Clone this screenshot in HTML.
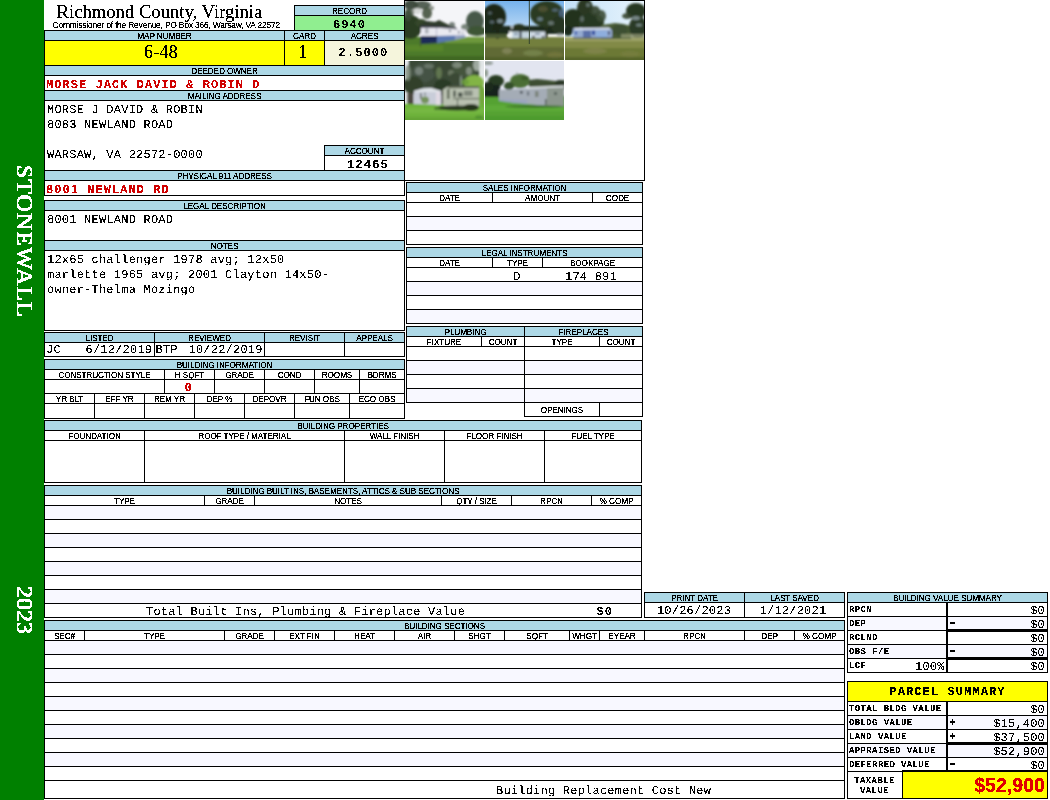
<!DOCTYPE html>
<html lang="en"><head><meta charset="utf-8"><title>Richmond County, Virginia - Property Record Card</title>
<style>
*{box-sizing:border-box;margin:0;padding:0}
html,body{width:1050px;height:800px;overflow:hidden;background:#fff}
body{position:relative;font-family:"Liberation Sans",sans-serif;color:#000}
.side{position:absolute;left:0;top:0;width:44px;height:800px;background:#008000}
.vt{position:absolute;left:2.5px;width:44px;color:#fff;font-family:"Liberation Serif",serif;font-size:24px;line-height:44px;writing-mode:vertical-rl;white-space:nowrap;-webkit-text-stroke:.4px #fff}
.c{position:absolute;border:1px solid #000}
.x{position:absolute;border:1px solid transparent;overflow:hidden;white-space:nowrap}
#tx{position:absolute;left:0;top:0;width:1050px;height:800px;filter:url(#thr)}
.m,.mb,.red,.lab,.val{text-rendering:geometricPrecision}
.m,.val,.mb,.red,.sred,.lab{filter:url(#thm)}
.title,.big,.sub{filter:url(#thb)}
.t{position:absolute;white-space:nowrap}
.h{font:8.2px/10px "Liberation Sans",sans-serif;text-align:center;letter-spacing:-.1px;padding-top:1px}
.m{font:12px/15px "Liberation Mono",monospace;letter-spacing:.22px;padding-left:2px}
.t.m{padding-left:0;line-height:13px}
.mb{font:bold 12px/13px "Liberation Mono",monospace;letter-spacing:1.1px}
.red{font:bold 12px/14px "Liberation Mono",monospace;color:#d00000;letter-spacing:1.05px;padding-left:1px;padding-top:2px}
.sred{font:bold 12px/13px "Liberation Mono",monospace;color:#d00000;text-align:center;padding:2px 3px 0 0;text-rendering:geometricPrecision}
.big{font:17.8px/23px "Liberation Serif",serif;text-align:center;letter-spacing:.4px}
.title{position:absolute;left:56.5px;top:1px;font:18.67px/22px "Liberation Serif",serif;white-space:nowrap}
.sub{position:absolute;left:52.5px;top:20px;font:8.5px/10px "Liberation Sans",sans-serif;white-space:nowrap;letter-spacing:-.23px;}
.lab{font:bold 9px/13px "Liberation Mono",monospace;padding-left:1px;padding-top:1px;letter-spacing:.38px}
.val{font:12px/14px "Liberation Mono",monospace;text-align:right;padding-right:2px;padding-top:1px;letter-spacing:.2px}
.sgn{font:12px/14px "Liberation Mono",monospace;text-rendering:geometricPrecision}
.ph{position:absolute;display:block}
.thick{position:absolute;background:#000}
.tax{font:bold 19.6px/25px "Liberation Sans",sans-serif;color:#e00000;text-align:right;padding-right:2px;padding-top:1px}
</style></head>
<body>
<div class="side"></div>
<svg width="0" height="0" style="position:absolute"><defs><filter id="thr" x="0" y="0" width="100%" height="100%" color-interpolation-filters="sRGB"><feComponentTransfer><feFuncA type="discrete" tableValues="0 1 1"/></feComponentTransfer></filter><filter id="thb" x="0" y="0" width="100%" height="100%" color-interpolation-filters="sRGB"><feComponentTransfer><feFuncA type="discrete" tableValues="0 0 0 1 1 1 1 1"/></feComponentTransfer></filter><filter id="thm" x="0" y="0" width="100%" height="100%" color-interpolation-filters="sRGB"><feComponentTransfer><feFuncA type="discrete" tableValues="0 0 0 0 1 1 1 1 1"/></feComponentTransfer></filter></defs></svg>
<div class="c" style="left:294px;top:5px;width:111px;height:11px;background:#add8e6;"></div>
<div class="c" style="left:294px;top:15px;width:111px;height:16px;background:#90ee90;padding-top:3px;text-align:center;"></div>
<div class="c" style="left:44px;top:30px;width:241px;height:11px;background:#add8e6;"></div>
<div class="c" style="left:284px;top:30px;width:41px;height:11px;background:#add8e6;"></div>
<div class="c" style="left:324px;top:30px;width:81px;height:11px;background:#add8e6;"></div>
<div class="c" style="left:44px;top:40px;width:241px;height:26px;background:#ffff00;padding-right:7px;"></div>
<div class="c" style="left:284px;top:40px;width:41px;height:26px;background:#ffff00;padding-right:3px;"></div>
<div class="c" style="left:324px;top:40px;width:81px;height:26px;background:#f5f5dc;padding-top:6px;text-align:center;padding-right:2px;"></div>
<div class="c" style="left:44px;top:65px;width:361px;height:11px;background:#add8e6;"></div>
<div class="c" style="left:44px;top:75px;width:361px;height:16px;"></div>
<div class="c" style="left:44px;top:90px;width:361px;height:11px;background:#add8e6;"></div>
<div class="c" style="left:44px;top:100px;width:361px;height:71px;padding-top:2px;"></div>
<div class="c" style="left:324px;top:145px;width:81px;height:11px;background:#add8e6;"></div>
<div class="c" style="left:324px;top:155px;width:81px;height:16px;padding-top:3px;text-align:center;padding-left:7px;"></div>
<div class="c" style="left:44px;top:170px;width:361px;height:11px;background:#add8e6;"></div>
<div class="c" style="left:44px;top:180px;width:361px;height:16px;"></div>
<div class="c" style="left:44px;top:200px;width:361px;height:11px;background:#add8e6;"></div>
<div class="c" style="left:44px;top:210px;width:361px;height:31px;padding-top:2px;"></div>
<div class="c" style="left:44px;top:240px;width:361px;height:11px;background:#add8e6;"></div>
<div class="c" style="left:44px;top:250px;width:361px;height:81px;padding-top:2px;"></div>
<div class="c" style="left:44px;top:332px;width:111px;height:11px;background:#add8e6;"></div>
<div class="c" style="left:44px;top:342px;width:111px;height:15px;"></div>
<div class="c" style="left:154px;top:332px;width:111px;height:11px;background:#add8e6;"></div>
<div class="c" style="left:154px;top:342px;width:111px;height:15px;"></div>
<div class="c" style="left:264px;top:332px;width:81px;height:11px;background:#add8e6;"></div>
<div class="c" style="left:264px;top:342px;width:81px;height:15px;"></div>
<div class="c" style="left:344px;top:332px;width:61px;height:11px;background:#add8e6;"></div>
<div class="c" style="left:344px;top:342px;width:61px;height:15px;"></div>
<div class="c" style="left:44px;top:359px;width:361px;height:11px;background:#add8e6;"></div>
<div class="c" style="left:44px;top:369px;width:121px;height:11px;"></div>
<div class="c" style="left:44px;top:379px;width:121px;height:15px;"></div>
<div class="c" style="left:164px;top:369px;width:51px;height:11px;"></div>
<div class="c" style="left:164px;top:379px;width:51px;height:15px;"></div>
<div class="c" style="left:214px;top:369px;width:51px;height:11px;"></div>
<div class="c" style="left:214px;top:379px;width:51px;height:15px;"></div>
<div class="c" style="left:264px;top:369px;width:51px;height:11px;"></div>
<div class="c" style="left:264px;top:379px;width:51px;height:15px;"></div>
<div class="c" style="left:314px;top:369px;width:46px;height:11px;"></div>
<div class="c" style="left:314px;top:379px;width:46px;height:15px;"></div>
<div class="c" style="left:359px;top:369px;width:46px;height:11px;"></div>
<div class="c" style="left:359px;top:379px;width:46px;height:15px;"></div>
<div class="c" style="left:44px;top:393px;width:51px;height:11px;"></div>
<div class="c" style="left:44px;top:403px;width:51px;height:16px;"></div>
<div class="c" style="left:94px;top:393px;width:51px;height:11px;"></div>
<div class="c" style="left:94px;top:403px;width:51px;height:16px;"></div>
<div class="c" style="left:144px;top:393px;width:51px;height:11px;"></div>
<div class="c" style="left:144px;top:403px;width:51px;height:16px;"></div>
<div class="c" style="left:194px;top:393px;width:51px;height:11px;"></div>
<div class="c" style="left:194px;top:403px;width:51px;height:16px;"></div>
<div class="c" style="left:244px;top:393px;width:51px;height:11px;"></div>
<div class="c" style="left:244px;top:403px;width:51px;height:16px;"></div>
<div class="c" style="left:294px;top:393px;width:56px;height:11px;"></div>
<div class="c" style="left:294px;top:403px;width:56px;height:16px;"></div>
<div class="c" style="left:349px;top:393px;width:56px;height:11px;"></div>
<div class="c" style="left:349px;top:403px;width:56px;height:16px;"></div>
<div class="c" style="left:404px;top:0px;width:241px;height:181px;"></div>
<svg class="ph" style="left:405px;top:1px" width="79" height="59" viewBox="0 0 79 59"><defs><filter id="b1" x="-10%" y="-10%" width="120%" height="120%"><feGaussianBlur stdDeviation="0.8"/></filter><filter id="s1" x="-10%" y="-10%" width="120%" height="120%"><feGaussianBlur stdDeviation="0.4"/></filter><clipPath id="c1"><rect width="79" height="59"/></clipPath></defs><g clip-path="url(#c1)"><rect x="0" y="0" width="79" height="59" fill="#f4f5f8"/><g filter="url(#b1)"><rect x="-2" y="36" width="83" height="25" fill="#4e7a2a"/><rect x="40" y="36" width="41" height="6" fill="#76a040" opacity="0.8"/><rect x="-2" y="55" width="83" height="6" fill="#3f6420" opacity="0.8"/><rect x="-2" y="44" width="40" height="6" fill="#5e8c2e" opacity="0.7"/><ellipse cx="6" cy="4" rx="7" ry="5" fill="#2e3c2c" opacity="0.9"/><ellipse cx="17" cy="4" rx="9" ry="4" fill="#3a4838" opacity="0.85"/><ellipse cx="22" cy="12" rx="5" ry="6" fill="#3a4834" opacity="0.85"/><ellipse cx="12" cy="10" rx="5" ry="3" fill="#c8ccc8" opacity="0.7"/><ellipse cx="5" cy="12" rx="4" ry="4" fill="#5a6456" opacity="0.8"/><ellipse cx="27" cy="7" rx="2" ry="2" fill="#5a6456" opacity="0.7"/><ellipse cx="5" cy="26" rx="12" ry="12" fill="#2a3e22"/><ellipse cx="16" cy="22" rx="6" ry="4" fill="#34462c"/><ellipse cx="3" cy="14" rx="4" ry="6" fill="#3a4a36" opacity="0.9"/><polygon points="14,24 22,20 30,21 34,19 40,22 46,25 52,27 52,30 14,30" fill="#2e3a2c"/><ellipse cx="47" cy="24" rx="3" ry="3" fill="#56625a" opacity="0.8"/><ellipse cx="70" cy="20" rx="9" ry="10" fill="#46584a"/><ellipse cx="72" cy="30" rx="10" ry="5" fill="#3e5434"/><ellipse cx="60" cy="27" rx="4" ry="4" fill="#5a6a5c" opacity="0.8"/><polygon points="16,26 52,27 61,29 61,36 50,38 32,41 16,42" fill="#e9e9f1"/><polygon points="16,25 36,25.5 52,27 52,28.2 36,27 16,27" fill="#4a4a5a"/><polygon points="16,35 32,35 32,42 16,43" fill="#1c2a58"/><polygon points="32,35 50,34.5 50,39 32,42" fill="#5876b0"/><polygon points="50,34.5 60,34 60,36.5 50,39" fill="#8e9cc0"/><rect x="20" y="27.5" width="3.5" height="5" fill="#9aa0a8" opacity="0.8"/><rect x="31" y="27" width="1" height="8" fill="#a8a8c0" opacity="0.8"/><rect x="44" y="29" width="2" height="2" fill="#707888"/><rect x="53" y="30" width="1.5" height="2.5" fill="#707888"/><rect x="57" y="31" width="1" height="2" fill="#808898"/><rect x="15" y="36" width="1" height="10" fill="#3c4c2c" opacity="0.8"/></g></g></svg>
<svg class="ph" style="left:485px;top:1px" width="79" height="59" viewBox="0 0 79 59"><defs><filter id="b2" x="-10%" y="-10%" width="120%" height="120%"><feGaussianBlur stdDeviation="0.8"/></filter><filter id="s2" x="-10%" y="-10%" width="120%" height="120%"><feGaussianBlur stdDeviation="0.4"/></filter><clipPath id="c2"><rect width="79" height="59"/></clipPath></defs><g clip-path="url(#c2)"><linearGradient id="sk2" x1="0" y1="0" x2="0" y2="1"><stop offset="0" stop-color="#76b2ec"/><stop offset="1" stop-color="#c4def6"/></linearGradient><rect x="0" y="0" width="79" height="32" fill="url(#sk2)"/><g filter="url(#b2)"><rect x="-2" y="36" width="83" height="25" fill="#737f3e"/><rect x="-2" y="46" width="83" height="15" fill="#5c6634" opacity="0.8"/><ellipse cx="22" cy="50" rx="5" ry="3" fill="#8a8c62" opacity="0.7"/><ellipse cx="48" cy="52" rx="10" ry="3" fill="#7a8a52" opacity="0.7"/><ellipse cx="70" cy="54" rx="8" ry="3" fill="#7c7c40" opacity="0.6"/><rect x="-2" y="56" width="83" height="5" fill="#4a5828" opacity="0.7"/><rect x="-2" y="25" width="83" height="8" fill="#1e2a1a"/><ellipse cx="34" cy="26" rx="6" ry="3" fill="#26321e"/><ellipse cx="27" cy="26.5" rx="1.2" ry="1.2" fill="#e8f0f8" opacity="0.9"/><ellipse cx="9" cy="16" rx="12" ry="13" fill="#1a2618"/><ellipse cx="3" cy="22" rx="6" ry="10" fill="#1c2a1a"/><ellipse cx="15" cy="20" rx="3" ry="2" fill="#8c9ca4" opacity="0.8"/><ellipse cx="5" cy="12" rx="2" ry="1.5" fill="#6c7c84" opacity="0.7"/><ellipse cx="7" cy="21" rx="2.5" ry="1.5" fill="#8090a0" opacity="0.6"/><rect x="11.5" y="28" width="2" height="10" fill="#1a2216"/><rect x="0" y="33" width="22" height="4" fill="#4c5c34"/><ellipse cx="62" cy="13" rx="17" ry="13" fill="#2c3a24"/><ellipse cx="74" cy="24" rx="8" ry="9" fill="#283620"/><ellipse cx="58" cy="8" rx="5" ry="3" fill="#5a5a38" opacity="0.7"/><ellipse cx="55" cy="18" rx="3" ry="2" fill="#7890a0" opacity="0.7"/><ellipse cx="70" cy="9" rx="3" ry="1.5" fill="#6c88a8" opacity="0.6"/><ellipse cx="66" cy="22" rx="3" ry="2" fill="#8a9aa0" opacity="0.6"/><ellipse cx="76" cy="12" rx="2" ry="4" fill="#5a7ab0" opacity="0.6"/><rect x="60" y="26" width="2.5" height="11" fill="#28301e"/><rect x="24" y="30.5" width="36" height="6.5" fill="#c4d4de"/><rect x="24" y="30.5" width="3" height="6.5" fill="#f0f4f4"/><rect x="34.5" y="30.5" width="2" height="6.5" fill="#2a3040"/><rect x="29" y="32" width="4" height="2" fill="#8a9ab0"/><rect x="46" y="31.5" width="14" height="4" fill="#d4dce8"/><rect x="50" y="32" width="5" height="1.5" fill="#6a7a90"/><ellipse cx="48.5" cy="36" rx="1.2" ry="1.2" fill="#202020"/><ellipse cx="58" cy="36" rx="1.2" ry="1.2" fill="#202020"/><ellipse cx="75" cy="33.5" rx="3.5" ry="1.6" fill="#8a9494" opacity="0.7"/></g><g filter="url(#s2)"><rect x="43.8" y="0" width="1.1" height="43" fill="#34402e" opacity="0.85"/></g></g></svg>
<svg class="ph" style="left:565px;top:1px" width="79" height="59" viewBox="0 0 79 59"><defs><filter id="b3" x="-10%" y="-10%" width="120%" height="120%"><feGaussianBlur stdDeviation="0.8"/></filter><filter id="s3" x="-10%" y="-10%" width="120%" height="120%"><feGaussianBlur stdDeviation="0.4"/></filter><clipPath id="c3"><rect width="79" height="59"/></clipPath></defs><g clip-path="url(#c3)"><linearGradient id="sk3" x1="0" y1="0" x2="1" y2="0"><stop offset="0" stop-color="#c2e0f8"/><stop offset="1" stop-color="#e8f4fc"/></linearGradient><rect x="0" y="0" width="79" height="36" fill="url(#sk3)"/><g filter="url(#b3)"><rect x="-2" y="36" width="83" height="25" fill="#828a46"/><rect x="-2" y="36" width="83" height="4" fill="#a4a870" opacity="0.8"/><rect x="-2" y="47" width="83" height="14" fill="#66742f" opacity="0.8"/><ellipse cx="30" cy="50" rx="12" ry="3" fill="#8a8a58" opacity="0.6"/><ellipse cx="65" cy="53" rx="10" ry="3" fill="#7c8044" opacity="0.6"/><rect x="-2" y="56" width="83" height="5" fill="#4e5c28" opacity="0.7"/><ellipse cx="20" cy="8" rx="8" ry="11" fill="#2a3824"/><ellipse cx="8" cy="19" rx="10" ry="11" fill="#24321c"/><ellipse cx="26" cy="21" rx="13" ry="9" fill="#283820"/><ellipse cx="36" cy="15" rx="5" ry="6" fill="#3a4a34" opacity="0.9"/><ellipse cx="30" cy="10" rx="5" ry="5" fill="#34442e" opacity="0.9"/><ellipse cx="3" cy="30" rx="5" ry="5" fill="#1e2a1a"/><ellipse cx="23" cy="4" rx="2" ry="2" fill="#8a9ca0" opacity="0.6"/><ellipse cx="17" cy="18" rx="2" ry="3" fill="#8898a0" opacity="0.5"/><polygon points="36,24 44,23 50,22 58,23 66,25 66,38 36,38" fill="#4a5c36"/><ellipse cx="55" cy="29" rx="8" ry="6" fill="#3e5030"/><ellipse cx="71" cy="10" rx="10" ry="8" fill="#283824"/><ellipse cx="73" cy="26" rx="9" ry="11" fill="#2a3a26"/><ellipse cx="62" cy="15" rx="5" ry="3" fill="#34442e" opacity="0.9"/><ellipse cx="71" cy="17" rx="4" ry="2" fill="#98a8b0" opacity="0.7"/><ellipse cx="74" cy="24" rx="3" ry="1.5" fill="#a0b0b8" opacity="0.6"/><rect x="56" y="33" width="24" height="4" fill="#8c9470" opacity="0.8"/><polygon points="8,27.5 44,27 47,29 47,37 10,37 8,35" fill="#94aad0"/><polygon points="9,27 44,26.5 46,28.5 10,29" fill="#d8e0f0"/><rect x="18" y="29.5" width="8" height="7" fill="#5a70a8"/><rect x="27" y="29.5" width="3" height="4.5" fill="#2848a0"/><rect x="10" y="30.5" width="2" height="3" fill="#2c50a8"/><rect x="43" y="30" width="1.6" height="4" fill="#30385c"/><rect x="31" y="30" width="11" height="7" fill="#8eaede"/><rect x="8" y="36.5" width="40" height="1.2" fill="#3c4434" opacity="0.8"/></g></g></svg>
<svg class="ph" style="left:405px;top:61px" width="79" height="59" viewBox="0 0 79 59"><defs><filter id="b4" x="-10%" y="-10%" width="120%" height="120%"><feGaussianBlur stdDeviation="0.8"/></filter><filter id="s4" x="-10%" y="-10%" width="120%" height="120%"><feGaussianBlur stdDeviation="0.4"/></filter><clipPath id="c4"><rect width="79" height="59"/></clipPath></defs><g clip-path="url(#c4)"><rect x="0" y="0" width="79" height="59" fill="#e4e8ea"/><g filter="url(#b4)"><rect x="4" y="-2" width="70" height="32" fill="#3a4a38"/><ellipse cx="18" cy="12" rx="12" ry="10" fill="#445244"/><ellipse cx="40" cy="8" rx="12" ry="9" fill="#3a4a36"/><ellipse cx="60" cy="8" rx="12" ry="8" fill="#44543e"/><ellipse cx="14" cy="10" rx="4" ry="4" fill="#98a49c" opacity="0.6"/><ellipse cx="24" cy="5" rx="5" ry="2.5" fill="#8c988c" opacity="0.5"/><ellipse cx="34" cy="12" rx="3" ry="6" fill="#6c8058" opacity="0.8"/><ellipse cx="52" cy="4" rx="5" ry="3" fill="#a0aca0" opacity="0.6"/><ellipse cx="64" cy="10" rx="3" ry="4" fill="#aab4aa" opacity="0.6"/><ellipse cx="46" cy="12" rx="3" ry="3" fill="#88947f" opacity="0.6"/><ellipse cx="72" cy="4" rx="4" ry="6" fill="#c8d0cc" opacity="0.7"/><ellipse cx="8" cy="24" rx="10" ry="9" fill="#30402a"/><ellipse cx="38" cy="26" rx="9" ry="8" fill="#2c3a28"/><ellipse cx="3" cy="12" rx="3" ry="8" fill="#7c8a78" opacity="0.8"/><ellipse cx="50" cy="17" rx="6" ry="5" fill="#3a4a34"/><ellipse cx="56" cy="20" rx="1.2" ry="6" fill="#9aa69c" opacity="0.7"/><ellipse cx="69" cy="22" rx="10" ry="8" fill="#82b444"/><ellipse cx="76" cy="36" rx="5" ry="12" fill="#74a83c"/><ellipse cx="60" cy="21" rx="4" ry="3" fill="#6c9c3c" opacity="0.8"/><rect x="-2" y="43" width="83" height="18" fill="#6eb23a"/><rect x="-2" y="47" width="83" height="5" fill="#7cbc48" opacity="0.6"/><rect x="-2" y="56" width="83" height="5" fill="#5c9c30" opacity="0.6"/><rect x="2.5" y="32" width="6" height="11" fill="#4c4640"/><polygon points="9,30 18,27.5 26,27 36,30 36,44 9,43" fill="#c9cdd9"/><polygon points="9,30 18,27.5 26,27 36,30 36,31 9,31" fill="#dfe3e8"/><rect x="15" y="32" width="1.4" height="6" fill="#4a544a"/><rect x="19.5" y="31.5" width="1" height="3" fill="#5a645a"/><ellipse cx="20" cy="39" rx="4" ry="3.5" fill="#6c8c4c" opacity="0.9"/><rect x="31" y="31" width="4" height="13" fill="#e4dce4" opacity="0.9"/><rect x="36.3" y="30" width="2" height="13" fill="#3a3430"/><polygon points="38,28.5 43,25.5 74,25.5 74,46 44,46 38,44" fill="#b9c1b1"/><polygon points="43,25 74,25 74,27 43,27.2" fill="#5a6450"/><rect x="42" y="28" width="2.5" height="10" fill="#4a5444" opacity="0.8"/><rect x="48.5" y="29.5" width="2" height="6.5" fill="#2c342c"/><rect x="53" y="31.5" width="4.5" height="4.5" fill="#4c544c"/><rect x="59" y="29.5" width="8.5" height="5.5" fill="#80887c"/><rect x="48" y="37" width="26" height="1.2" fill="#5c6454"/><rect x="52" y="38" width="1" height="8" fill="#4a5444"/><ellipse cx="52" cy="47" rx="22" ry="2.6" fill="#2a3a22"/><ellipse cx="66" cy="46.5" rx="8" ry="3.5" fill="#26341e"/><ellipse cx="32" cy="47.5" rx="3" ry="1.5" fill="#4c7c30"/><ellipse cx="74" cy="56" rx="4" ry="1.5" fill="#4a8a2c" opacity="0.8"/></g></g></svg>
<svg class="ph" style="left:485px;top:61px" width="79" height="59" viewBox="0 0 79 59"><defs><filter id="b5" x="-10%" y="-10%" width="120%" height="120%"><feGaussianBlur stdDeviation="0.8"/></filter><filter id="s5" x="-10%" y="-10%" width="120%" height="120%"><feGaussianBlur stdDeviation="0.4"/></filter><clipPath id="c5"><rect width="79" height="59"/></clipPath></defs><g clip-path="url(#c5)"><rect x="0" y="0" width="79" height="59" fill="#e2e5f0"/><g filter="url(#b5)"><ellipse cx="3" cy="2" rx="5" ry="2" fill="#7a867c" opacity="0.7"/><ellipse cx="1" cy="12" rx="2" ry="4" fill="#6a7a64" opacity="0.7"/><rect x="-2" y="35" width="83" height="26" fill="#55a232"/><rect x="-2" y="44" width="83" height="6" fill="#62b03c" opacity="0.6"/><rect x="-2" y="55" width="83" height="6" fill="#4a962c" opacity="0.6"/><ellipse cx="11" cy="20" rx="8" ry="6" fill="#283a22"/><rect x="-2" y="24" width="17" height="12" fill="#16241a"/><ellipse cx="3" cy="26" rx="6" ry="5" fill="#1a2a1c"/><ellipse cx="35" cy="20" rx="10" ry="7" fill="#4c6e36"/><ellipse cx="24" cy="25" rx="5" ry="4" fill="#34502a"/><ellipse cx="40" cy="17" rx="4" ry="2" fill="#3c5a2c"/><polygon points="44,19 52,18 62,19 70,20 80,19 80,28 44,28" fill="#3c4e32"/><ellipse cx="75" cy="22" rx="5" ry="3" fill="#2a3826"/><ellipse cx="32" cy="13" rx="1" ry="2" fill="#8a968c" opacity="0.5"/><polygon points="14,29 42,27.5 79,25.5 79,46 62,45 42,43 14,39" fill="#a4acb6"/><polygon points="42,26 79,24.5 79,26.5 60,27 42,28" fill="#dfe3e6"/><polygon points="62,27 79,26.5 79,46 62,45" fill="#8c968e"/><polygon points="14,38 42,39 42,43 28,42 14,40" fill="#9aa4c0" opacity="0.9"/><rect x="35" y="30" width="2.5" height="2.5" fill="#3a424a"/><rect x="42.5" y="30.5" width="1.2" height="4" fill="#3a424a"/><rect x="50" y="30" width="3.5" height="6" fill="#7c847c"/><rect x="69" y="31" width="3" height="3" fill="#5c6660"/><rect x="60" y="38" width="1.5" height="6" fill="#4a544c"/><ellipse cx="50" cy="45.5" rx="30" ry="1.4" fill="#3a6c28" opacity="0.8"/></g></g></svg>
<div class="c" style="left:406px;top:182px;width:237px;height:11px;background:#add8e6;"></div>
<div class="c" style="left:406px;top:192px;width:87px;height:11px;"></div>
<div class="c" style="left:492px;top:192px;width:101px;height:11px;"></div>
<div class="c" style="left:592px;top:192px;width:51px;height:11px;"></div>
<div class="c" style="left:406px;top:202px;width:237px;height:15px;"></div>
<div class="c" style="left:406px;top:216px;width:237px;height:15px;background:#f8f8ff;"></div>
<div class="c" style="left:406px;top:230px;width:237px;height:15px;"></div>
<div class="c" style="left:406px;top:247px;width:237px;height:11px;background:#add8e6;"></div>
<div class="c" style="left:406px;top:257px;width:87px;height:11px;"></div>
<div class="c" style="left:492px;top:257px;width:51px;height:11px;"></div>
<div class="c" style="left:542px;top:257px;width:101px;height:11px;"></div>
<div class="c" style="left:406px;top:267px;width:237px;height:15px;"></div>
<div class="c" style="left:406px;top:281px;width:237px;height:15px;background:#f8f8ff;"></div>
<div class="c" style="left:406px;top:295px;width:237px;height:15px;"></div>
<div class="c" style="left:406px;top:309px;width:237px;height:15px;background:#f8f8ff;"></div>
<div class="c" style="left:406px;top:326px;width:119px;height:11px;background:#add8e6;"></div>
<div class="c" style="left:524px;top:326px;width:119px;height:11px;background:#add8e6;"></div>
<div class="c" style="left:406px;top:336px;width:76px;height:11px;"></div>
<div class="c" style="left:481px;top:336px;width:44px;height:11px;"></div>
<div class="c" style="left:524px;top:336px;width:76px;height:11px;"></div>
<div class="c" style="left:599px;top:336px;width:44px;height:11px;"></div>
<div class="c" style="left:406px;top:346px;width:119px;height:15px;"></div>
<div class="c" style="left:524px;top:346px;width:119px;height:15px;"></div>
<div class="c" style="left:406px;top:360px;width:119px;height:15px;background:#f8f8ff;"></div>
<div class="c" style="left:524px;top:360px;width:119px;height:15px;background:#f8f8ff;"></div>
<div class="c" style="left:406px;top:374px;width:119px;height:15px;"></div>
<div class="c" style="left:524px;top:374px;width:119px;height:15px;"></div>
<div class="c" style="left:406px;top:388px;width:119px;height:15px;background:#f8f8ff;"></div>
<div class="c" style="left:524px;top:388px;width:119px;height:15px;background:#f8f8ff;"></div>
<div class="c" style="left:524px;top:402px;width:76px;height:15px;padding-top:3px;"></div>
<div class="c" style="left:599px;top:402px;width:44px;height:15px;"></div>
<div class="c" style="left:44px;top:420px;width:598px;height:11px;background:#add8e6;"></div>
<div class="c" style="left:44px;top:430px;width:101px;height:11px;"></div>
<div class="c" style="left:44px;top:440px;width:101px;height:43px;"></div>
<div class="c" style="left:144px;top:430px;width:201px;height:11px;"></div>
<div class="c" style="left:144px;top:440px;width:201px;height:43px;"></div>
<div class="c" style="left:344px;top:430px;width:101px;height:11px;"></div>
<div class="c" style="left:344px;top:440px;width:101px;height:43px;"></div>
<div class="c" style="left:444px;top:430px;width:101px;height:11px;"></div>
<div class="c" style="left:444px;top:440px;width:101px;height:43px;"></div>
<div class="c" style="left:544px;top:430px;width:98px;height:11px;"></div>
<div class="c" style="left:544px;top:440px;width:98px;height:43px;"></div>
<div class="c" style="left:44px;top:485px;width:598px;height:11px;background:#add8e6;"></div>
<div class="c" style="left:44px;top:495px;width:161px;height:11px;"></div>
<div class="c" style="left:204px;top:495px;width:51px;height:11px;"></div>
<div class="c" style="left:254px;top:495px;width:188px;height:11px;"></div>
<div class="c" style="left:441px;top:495px;width:71px;height:11px;"></div>
<div class="c" style="left:511px;top:495px;width:81px;height:11px;"></div>
<div class="c" style="left:591px;top:495px;width:51px;height:11px;"></div>
<div class="c" style="left:44px;top:505px;width:598px;height:15px;background:#f8f8ff;"></div>
<div class="c" style="left:44px;top:519px;width:598px;height:15px;"></div>
<div class="c" style="left:44px;top:533px;width:598px;height:15px;background:#f8f8ff;"></div>
<div class="c" style="left:44px;top:547px;width:598px;height:15px;"></div>
<div class="c" style="left:44px;top:561px;width:598px;height:15px;background:#f8f8ff;"></div>
<div class="c" style="left:44px;top:575px;width:598px;height:15px;"></div>
<div class="c" style="left:44px;top:589px;width:598px;height:15px;background:#f8f8ff;"></div>
<div class="c" style="left:44px;top:603px;width:598px;height:15px;"></div>
<div class="c" style="left:644px;top:592px;width:101px;height:11px;background:#add8e6;"></div>
<div class="c" style="left:744px;top:592px;width:101px;height:11px;background:#add8e6;"></div>
<div class="c" style="left:644px;top:602px;width:101px;height:16px;text-align:center;line-height:14px;padding:1px 1px 0 0;"></div>
<div class="c" style="left:744px;top:602px;width:101px;height:16px;text-align:center;line-height:14px;padding:1px 3px 0 0;"></div>
<div class="c" style="left:44px;top:620px;width:801px;height:11px;background:#add8e6;"></div>
<div class="c" style="left:44px;top:630px;width:41px;height:11px;"></div>
<div class="c" style="left:84px;top:630px;width:141px;height:11px;"></div>
<div class="c" style="left:224px;top:630px;width:51px;height:11px;"></div>
<div class="c" style="left:274px;top:630px;width:61px;height:11px;"></div>
<div class="c" style="left:334px;top:630px;width:61px;height:11px;"></div>
<div class="c" style="left:394px;top:630px;width:61px;height:11px;"></div>
<div class="c" style="left:454px;top:630px;width:51px;height:11px;"></div>
<div class="c" style="left:504px;top:630px;width:66px;height:11px;"></div>
<div class="c" style="left:569px;top:630px;width:31px;height:11px;"></div>
<div class="c" style="left:599px;top:630px;width:46px;height:11px;"></div>
<div class="c" style="left:644px;top:630px;width:101px;height:11px;"></div>
<div class="c" style="left:744px;top:630px;width:51px;height:11px;"></div>
<div class="c" style="left:794px;top:630px;width:51px;height:11px;"></div>
<div class="c" style="left:44px;top:640px;width:801px;height:15px;background:#f8f8ff;"></div>
<div class="c" style="left:44px;top:654px;width:801px;height:15px;"></div>
<div class="c" style="left:44px;top:668px;width:801px;height:15px;background:#f8f8ff;"></div>
<div class="c" style="left:44px;top:682px;width:801px;height:15px;"></div>
<div class="c" style="left:44px;top:696px;width:801px;height:15px;background:#f8f8ff;"></div>
<div class="c" style="left:44px;top:710px;width:801px;height:15px;"></div>
<div class="c" style="left:44px;top:724px;width:801px;height:15px;background:#f8f8ff;"></div>
<div class="c" style="left:44px;top:738px;width:801px;height:15px;"></div>
<div class="c" style="left:44px;top:752px;width:801px;height:15px;background:#f8f8ff;"></div>
<div class="c" style="left:44px;top:766px;width:801px;height:15px;"></div>
<div class="c" style="left:44px;top:780px;width:801px;height:19px;"></div>
<div class="c" style="left:847px;top:592px;width:201px;height:11px;background:#add8e6;"></div>
<div class="c" style="left:847px;top:602px;width:101px;height:15px;"></div>
<div class="c" style="left:947px;top:602px;width:101px;height:15px;"></div>
<div class="c" style="left:847px;top:616px;width:101px;height:15px;background:#f8f8ff;"></div>
<div class="c" style="left:947px;top:616px;width:101px;height:15px;background:#f8f8ff;"></div>
<div class="c" style="left:847px;top:630px;width:101px;height:15px;"></div>
<div class="c" style="left:947px;top:630px;width:101px;height:15px;"></div>
<div class="c" style="left:847px;top:644px;width:101px;height:15px;background:#f8f8ff;"></div>
<div class="c" style="left:947px;top:644px;width:101px;height:15px;background:#f8f8ff;"></div>
<div class="c" style="left:847px;top:658px;width:101px;height:15px;"></div>
<div class="c" style="left:947px;top:658px;width:101px;height:15px;"></div>
<div class="thick" style="left:946px;top:602px;width:2px;height:71px;"></div>
<div class="thick" style="left:947px;top:629px;width:101px;height:3px;"></div>
<div class="thick" style="left:947px;top:657px;width:101px;height:3px;"></div>
<div class="c" style="left:847px;top:681px;width:201px;height:21px;background:#ffff00;text-align:center;line-height:19px;padding-top:1px;"></div>
<div class="c" style="left:847px;top:701px;width:101px;height:15px;"></div>
<div class="c" style="left:947px;top:701px;width:101px;height:15px;"></div>
<div class="c" style="left:847px;top:715px;width:101px;height:15px;background:#f8f8ff;"></div>
<div class="c" style="left:947px;top:715px;width:101px;height:15px;background:#f8f8ff;"></div>
<div class="c" style="left:847px;top:729px;width:101px;height:15px;"></div>
<div class="c" style="left:947px;top:729px;width:101px;height:15px;"></div>
<div class="c" style="left:847px;top:743px;width:101px;height:15px;background:#f8f8ff;"></div>
<div class="c" style="left:947px;top:743px;width:101px;height:15px;background:#f8f8ff;"></div>
<div class="c" style="left:847px;top:757px;width:101px;height:15px;"></div>
<div class="c" style="left:947px;top:757px;width:101px;height:15px;"></div>
<div class="thick" style="left:946px;top:701px;width:2px;height:71px;"></div>
<div class="thick" style="left:947px;top:742px;width:101px;height:3px;"></div>
<div class="thick" style="left:902px;top:770px;width:146px;height:2px;"></div>
<div class="c" style="left:847px;top:771px;width:56px;height:28px;text-align:center;line-height:10px;padding:4px 1px 0 0;"></div>
<div class="c" style="left:902px;top:771px;width:146px;height:28px;background:#ffff00;"></div>
<div id="tx">
<div class="vt" style="top:165px;letter-spacing:1px">STONEWALL</div>
<div class="vt" style="top:586px">2023</div>
<div class="title">Richmond County, Virginia</div>
<div class="sub">Commissioner of the Revenue, PO Box 366, Warsaw, VA 22572</div>
<div class="x h" style="left:294px;top:5px;width:111px;height:11px;">RECORD</div>
<div class="x mb" style="left:294px;top:15px;width:111px;height:16px;padding-top:3px;text-align:center;">6940</div>
<div class="x h" style="left:44px;top:30px;width:241px;height:11px;">MAP NUMBER</div>
<div class="x h" style="left:284px;top:30px;width:41px;height:11px;">CARD</div>
<div class="x h" style="left:324px;top:30px;width:81px;height:11px;">ACRES</div>
<div class="x big" style="left:44px;top:40px;width:241px;height:26px;padding-right:7px;">6-48</div>
<div class="x big" style="left:284px;top:40px;width:41px;height:26px;padding-right:3px;">1</div>
<div class="x mb" style="left:324px;top:40px;width:81px;height:26px;padding-top:6px;text-align:center;padding-right:2px;">2.5000</div>
<div class="x h" style="left:44px;top:65px;width:361px;height:11px;">DEEDED OWNER</div>
<div class="x red" style="left:44px;top:75px;width:361px;height:16px;">MORSE JACK DAVID &amp; ROBIN D</div>
<div class="x h" style="left:44px;top:90px;width:361px;height:11px;">MAILING ADDRESS</div>
<div class="x m" style="left:44px;top:100px;width:361px;height:71px;padding-top:2px;">MORSE J DAVID &amp; ROBIN<br>8083 NEWLAND ROAD<br><br>WARSAW, VA 22572-0000</div>
<div class="x h" style="left:324px;top:145px;width:81px;height:11px;">ACCOUNT</div>
<div class="x mb" style="left:324px;top:155px;width:81px;height:16px;padding-top:3px;text-align:center;padding-left:7px;">12465</div>
<div class="x h" style="left:44px;top:170px;width:361px;height:11px;">PHYSICAL 911 ADDRESS</div>
<div class="x red" style="left:44px;top:180px;width:361px;height:16px;">8001 NEWLAND RD</div>
<div class="x h" style="left:44px;top:200px;width:361px;height:11px;">LEGAL DESCRIPTION</div>
<div class="x m" style="left:44px;top:210px;width:361px;height:31px;padding-top:2px;">8001 NEWLAND ROAD</div>
<div class="x h" style="left:44px;top:240px;width:361px;height:11px;">NOTES</div>
<div class="x m" style="left:44px;top:250px;width:361px;height:81px;padding-top:2px;">12x65 challenger 1978 avg; 12x50<br>marlette 1965 avg; 2001 Clayton 14x50-<br>owner-Thelma Mozingo</div>
<div class="x h" style="left:44px;top:332px;width:111px;height:11px;">LISTED</div>
<div class="x h" style="left:154px;top:332px;width:111px;height:11px;">REVIEWED</div>
<div class="x h" style="left:264px;top:332px;width:81px;height:11px;">REVISIT</div>
<div class="x h" style="left:344px;top:332px;width:61px;height:11px;">APPEALS</div>
<div class="m t" style="left:46px;top:344px;">JC</div>
<div class="m t" style="left:85.5px;top:344px;">6/12/2019</div>
<div class="m t" style="left:155.5px;top:344px;">BTP</div>
<div class="m t" style="left:188.5px;top:344px;">10/22/2019</div>
<div class="x h" style="left:44px;top:359px;width:361px;height:11px;">BUILDING INFORMATION</div>
<div class="x h" style="left:44px;top:369px;width:121px;height:11px;">CONSTRUCTION STYLE</div>
<div class="x h" style="left:164px;top:369px;width:51px;height:11px;">H SQFT</div>
<div class="x sred" style="left:164px;top:379px;width:51px;height:15px;">0</div>
<div class="x h" style="left:214px;top:369px;width:51px;height:11px;">GRADE</div>
<div class="x h" style="left:264px;top:369px;width:51px;height:11px;">COND</div>
<div class="x h" style="left:314px;top:369px;width:46px;height:11px;">ROOMS</div>
<div class="x h" style="left:359px;top:369px;width:46px;height:11px;">BDRMS</div>
<div class="x h" style="left:44px;top:393px;width:51px;height:11px;">YR BLT</div>
<div class="x h" style="left:94px;top:393px;width:51px;height:11px;">EFF YR</div>
<div class="x h" style="left:144px;top:393px;width:51px;height:11px;">REM YR</div>
<div class="x h" style="left:194px;top:393px;width:51px;height:11px;">DEP %</div>
<div class="x h" style="left:244px;top:393px;width:51px;height:11px;">DEPOVR</div>
<div class="x h" style="left:294px;top:393px;width:56px;height:11px;">FUN OBS</div>
<div class="x h" style="left:349px;top:393px;width:56px;height:11px;">ECO OBS</div>
<div class="x h" style="left:406px;top:182px;width:237px;height:11px;">SALES INFORMATION</div>
<div class="x h" style="left:406px;top:192px;width:87px;height:11px;">DATE</div>
<div class="x h" style="left:492px;top:192px;width:101px;height:11px;">AMOUNT</div>
<div class="x h" style="left:592px;top:192px;width:51px;height:11px;">CODE</div>
<div class="x h" style="left:406px;top:247px;width:237px;height:11px;">LEGAL INSTRUMENTS</div>
<div class="x h" style="left:406px;top:257px;width:87px;height:11px;">DATE</div>
<div class="x h" style="left:492px;top:257px;width:51px;height:11px;">TYPE</div>
<div class="x h" style="left:542px;top:257px;width:101px;height:11px;">BOOKPAGE</div>
<div class="m t" style="left:492px;top:271px;width:50px;text-align:center;">D</div>
<div class="m t" style="left:541px;top:271px;width:100px;text-align:center;">174 891</div>
<div class="x h" style="left:406px;top:326px;width:119px;height:11px;">PLUMBING</div>
<div class="x h" style="left:524px;top:326px;width:119px;height:11px;">FIREPLACES</div>
<div class="x h" style="left:406px;top:336px;width:76px;height:11px;">FIXTURE</div>
<div class="x h" style="left:481px;top:336px;width:44px;height:11px;">COUNT</div>
<div class="x h" style="left:524px;top:336px;width:76px;height:11px;">TYPE</div>
<div class="x h" style="left:599px;top:336px;width:44px;height:11px;">COUNT</div>
<div class="x h" style="left:524px;top:402px;width:76px;height:15px;padding-top:3px;">OPENINGS</div>
<div class="x h" style="left:44px;top:420px;width:598px;height:11px;">BUILDING PROPERTIES</div>
<div class="x h" style="left:44px;top:430px;width:101px;height:11px;">FOUNDATION</div>
<div class="x h" style="left:144px;top:430px;width:201px;height:11px;">ROOF TYPE / MATERIAL</div>
<div class="x h" style="left:344px;top:430px;width:101px;height:11px;">WALL FINISH</div>
<div class="x h" style="left:444px;top:430px;width:101px;height:11px;">FLOOR FINISH</div>
<div class="x h" style="left:544px;top:430px;width:98px;height:11px;">FUEL TYPE</div>
<div class="x h" style="left:44px;top:485px;width:598px;height:11px;">BUILDING BUILT INS, BASEMENTS, ATTICS &amp; SUB SECTIONS</div>
<div class="x h" style="left:44px;top:495px;width:161px;height:11px;">TYPE</div>
<div class="x h" style="left:204px;top:495px;width:51px;height:11px;">GRADE</div>
<div class="x h" style="left:254px;top:495px;width:188px;height:11px;">NOTES</div>
<div class="x h" style="left:441px;top:495px;width:71px;height:11px;">QTY / SIZE</div>
<div class="x h" style="left:511px;top:495px;width:81px;height:11px;">RPCN</div>
<div class="x h" style="left:591px;top:495px;width:51px;height:11px;">% COMP</div>
<div class="m t" style="left:146px;top:605.5px;">Total Built Ins, Plumbing &amp; Fireplace Value</div>
<div class="mb t" style="left:596.5px;top:605.5px;">$0</div>
<div class="x h" style="left:644px;top:592px;width:101px;height:11px;">PRINT DATE</div>
<div class="x h" style="left:744px;top:592px;width:101px;height:11px;">LAST SAVED</div>
<div class="x m" style="left:644px;top:602px;width:101px;height:16px;text-align:center;line-height:14px;padding:1px 1px 0 0;">10/26/2023</div>
<div class="x m" style="left:744px;top:602px;width:101px;height:16px;text-align:center;line-height:14px;padding:1px 3px 0 0;">1/12/2021</div>
<div class="x h" style="left:44px;top:620px;width:801px;height:11px;">BUILDING SECTIONS</div>
<div class="x h" style="left:44px;top:630px;width:41px;height:11px;">SEC#</div>
<div class="x h" style="left:84px;top:630px;width:141px;height:11px;">TYPE</div>
<div class="x h" style="left:224px;top:630px;width:51px;height:11px;">GRADE</div>
<div class="x h" style="left:274px;top:630px;width:61px;height:11px;">EXT FIN</div>
<div class="x h" style="left:334px;top:630px;width:61px;height:11px;">HEAT</div>
<div class="x h" style="left:394px;top:630px;width:61px;height:11px;">AIR</div>
<div class="x h" style="left:454px;top:630px;width:51px;height:11px;">SHGT</div>
<div class="x h" style="left:504px;top:630px;width:66px;height:11px;">SQFT</div>
<div class="x h" style="left:569px;top:630px;width:31px;height:11px;">WHGT</div>
<div class="x h" style="left:599px;top:630px;width:46px;height:11px;">EYEAR</div>
<div class="x h" style="left:644px;top:630px;width:101px;height:11px;">RPCN</div>
<div class="x h" style="left:744px;top:630px;width:51px;height:11px;">DEP</div>
<div class="x h" style="left:794px;top:630px;width:51px;height:11px;">% COMP</div>
<div class="m t" style="left:496px;top:785px;">Building Replacement Cost New</div>
<div class="x h" style="left:847px;top:592px;width:201px;height:11px;">BUILDING VALUE SUMMARY</div>
<div class="x lab" style="left:847px;top:602px;width:101px;height:15px;">RPCN</div>
<div class="x val" style="left:947px;top:602px;width:101px;height:15px;">$0</div>
<div class="x lab" style="left:847px;top:616px;width:101px;height:15px;">DEP</div>
<div class="x val" style="left:947px;top:616px;width:101px;height:15px;">$0</div>
<div class="t sgn" style="left:949px;top:617px;">&minus;</div>
<div class="x lab" style="left:847px;top:630px;width:101px;height:15px;">RCLND</div>
<div class="x val" style="left:947px;top:630px;width:101px;height:15px;">$0</div>
<div class="x lab" style="left:847px;top:644px;width:101px;height:15px;">OBS F/E</div>
<div class="x val" style="left:947px;top:644px;width:101px;height:15px;">$0</div>
<div class="t sgn" style="left:949px;top:645px;">&minus;</div>
<div class="x lab" style="left:847px;top:658px;width:101px;height:15px;">LCF</div>
<div class="x val" style="left:947px;top:658px;width:101px;height:15px;">$0</div>
<div class="m t" style="left:915px;top:661px;">100%</div>
<div class="x mb" style="left:847px;top:681px;width:201px;height:21px;text-align:center;line-height:19px;padding-top:1px;">PARCEL SUMMARY</div>
<div class="x lab" style="left:847px;top:701px;width:101px;height:15px;">TOTAL BLDG VALUE</div>
<div class="x val" style="left:947px;top:701px;width:101px;height:15px;">$0</div>
<div class="x lab" style="left:847px;top:715px;width:101px;height:15px;">OBLDG VALUE</div>
<div class="x val" style="left:947px;top:715px;width:101px;height:15px;">$15,400</div>
<div class="t sgn" style="left:949px;top:716px;">+</div>
<div class="x lab" style="left:847px;top:729px;width:101px;height:15px;">LAND VALUE</div>
<div class="x val" style="left:947px;top:729px;width:101px;height:15px;">$37,500</div>
<div class="t sgn" style="left:949px;top:730px;">+</div>
<div class="x lab" style="left:847px;top:743px;width:101px;height:15px;">APPRAISED VALUE</div>
<div class="x val" style="left:947px;top:743px;width:101px;height:15px;">$52,900</div>
<div class="x lab" style="left:847px;top:757px;width:101px;height:15px;">DEFERRED VALUE</div>
<div class="x val" style="left:947px;top:757px;width:101px;height:15px;">$0</div>
<div class="t sgn" style="left:949px;top:758px;">&minus;</div>
<div class="x lab" style="left:847px;top:771px;width:56px;height:28px;text-align:center;line-height:10px;padding:4px 1px 0 0;">TAXABLE<br>VALUE</div>
<div class="x tax" style="left:902px;top:771px;width:146px;height:28px;">$52,900</div>
</div>
</body></html>
